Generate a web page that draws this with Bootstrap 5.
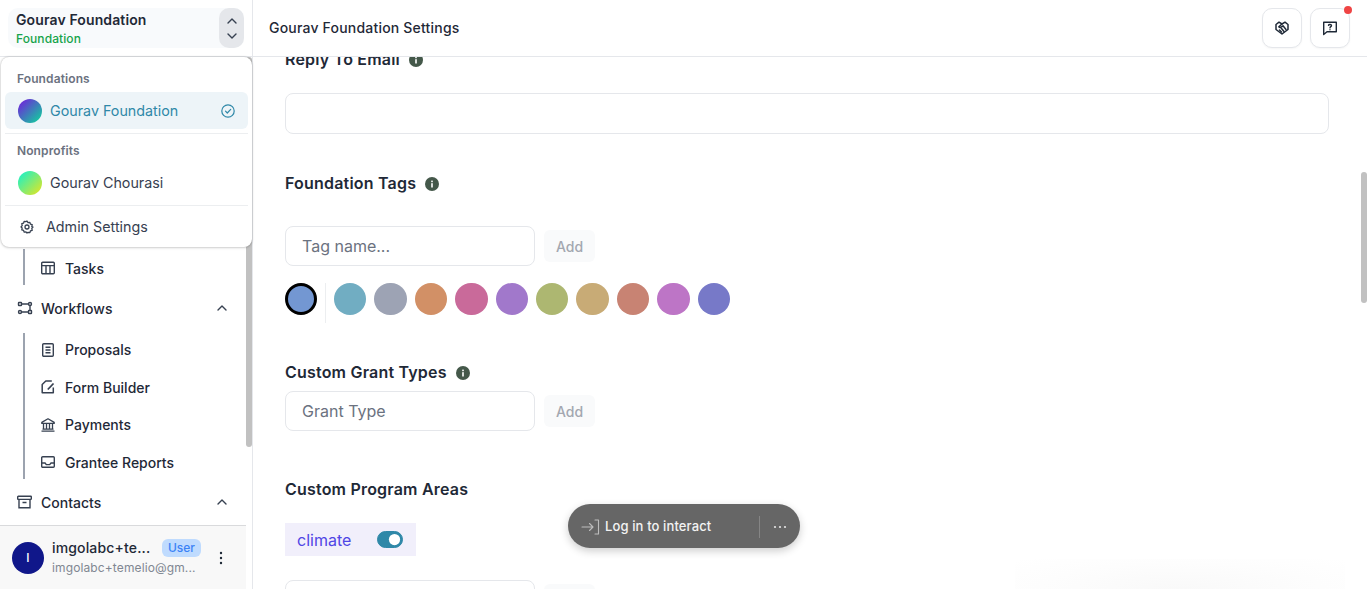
<!DOCTYPE html>
<html lang="en">
<head>
  <meta charset="UTF-8" />
  <title>Gourav Foundation Settings</title>
  <meta name="viewport" content="width=device-width, initial-scale=1" />
  <link href="https://cdn.jsdelivr.net/npm/bootstrap@5.3.3/dist/css/bootstrap.min.css" rel="stylesheet" />
  <style>
    html, body { height: 100%; overflow: hidden; }
    body { font-family: Inter, "Liberation Sans", sans-serif; color: #1f2937; background: #fff; }

    .app-shell { height: 589px; position: relative; }

    /* sidebar */
    .side-panel { width: 253px; flex: none; border-right: 1px solid #e5e7eb; position: relative; }
    .org-head { height: 57px; padding: 8px; border-bottom: 1px solid #e5e7eb; }
    .org-box { height: 40px; background: #f8fafc; border-radius: 10px; }
    .org-text { padding-left: 8px; }
    .org-name { font-size: 14px; font-weight: 600; line-height: 20px; letter-spacing: .12px; color: #1f2937; margin-top: 2px; }
    .org-kind { font-size: 12px; font-weight: 500; line-height: 16px; letter-spacing: .08px; color: #16a34a; margin-top: 1px; }
    .org-toggle { width: 25px; background: #e5e7eb; border-radius: 10px; gap: 7px; }

    .nav-area { padding-top: 192px; width: 246px; height: 468px; overflow: hidden; }
    .side-link { display: flex; align-items: center; font-size: 14px; font-weight: 500; color: #1f2937; }
    .side-group { margin-left: 23px; border-left: 2px solid #9ca3af; padding-left: 15px; }
    .side-top { padding-left: 16px; padding-right: 18px; height: 24px; gap: 9px; }
    .side-sub { height: 24px; gap: 9px; }
    .group-tasks { height: 36px; padding-top: 7px; }
    .top-flow { margin-top: 9px; padding-top: 4px; }
    .top-contacts { margin-top: 9px; padding-top: 4px; }
    .group-flow { height: 146px; margin-top: 15px; padding-top: 4.5px; }
    .group-flow .side-sub { margin-bottom: 13.5px; }

    .user-row { width: 246px; height: 64px; background: #f8f8f8; border-top: 1px solid #d9dadc; padding: 0 12px; position: absolute; left: 0; bottom: 0; }
    .user-avatar { width: 32px; height: 32px; background: #10178a; color: #fff; font-size: 12px; font-weight: 500; }
    .user-col { width: 149px; flex: none; }
    .user-name { font-size: 14px; font-weight: 500; line-height: 18px; letter-spacing: .15px; color: #1f2937; }
    .user-badge { background: #bfdbfe; color: #3b82f6; font-size: 12px; font-weight: 500; padding: 1px 6px; height: 18px; line-height: 16px; border-radius: 6px; }
    .user-mail { font-size: 12px; line-height: 16px; letter-spacing: .12px; color: #808792; margin-top: 3px; white-space: nowrap; }
    .user-more { margin-left: 10px; }
    .side-thumb { position: absolute; left: 246px; top: 57px; width: 6px; height: 390px; background: #c1c1c1; border-radius: 3px; }

    /* org menu */
    .org-menu { position: absolute; left: 1px; top: 57px; width: 251px; height: 190px; padding: 14px 0 0; margin: 0; background: #fff; border: 0; border-radius: 8px; box-shadow: 0 0 2px rgba(0,0,0,.28), 0 1px 3px rgba(0,0,0,.12); z-index: 5; }
    .menu-label { font-size: 12px; font-weight: 600; line-height: 16px; letter-spacing: .1px; color: #6b7280; padding-left: 16px; }
    .menu-row { display: flex; align-items: center; height: 37px; margin: 0 4px; padding: 0 13px; gap: 8px; font-size: 14.3px; color: #374151; border-radius: 6px; }
    .menu-row.is-active { background: #edf4f8; color: #2f88a8; margin-top: 5px; }
    .row-plain { margin-top: 5px; }
    .row-admin { margin-top: 2px; padding-left: 15px; gap: 12px; }
    .org-dot { width: 24px; height: 24px; border-radius: 50%; flex: none; }
    .dot-one { background: linear-gradient(135deg, #6d28d9 10%, #14c8a0 90%); }
    .dot-two { background: linear-gradient(135deg, #2ef0b8 15%, #d6e62c 90%); }
    .menu-line { height: 1px; background: #eceef0; margin: 4px 4px 0; }
    .label-two { margin-top: 9px; }

    /* main */
    .main-panel { min-width: 0; position: relative; }
    .page-head { height: 57px; padding: 0 17px 0 16px; border-bottom: 1px solid #e5e7eb; background: #fff; position: relative; z-index: 2; }
    .page-title { font-size: 14px; font-weight: 500; letter-spacing: .2px; color: #1f2937; margin: 0; }
    .head-btn { width: 40px; height: 40px; padding: 0; border: 1px solid #e5e7eb; border-radius: 10px; background: #fff; position: relative; box-shadow: 0 1px 2px rgba(0,0,0,.04); }
    .head-gap { gap: 8px; }
    .alert-dot { position: absolute; right: -3px; top: -3px; width: 8px; height: 8px; background: #ef4444; border-radius: 50%; }
    .page-body { height: 532px; overflow: hidden; padding: 0 38px 0 32px; }
    .field-label { display: flex; align-items: center; gap: 9px; height: 24px; font-size: 16px; font-weight: 600; letter-spacing: .2px; color: #1f2937; }
    .info-mark { width: 14px; height: 14px; flex: none; margin-top: 2px; }
    .field-input { height: 41px; border: 1px solid #e5e7eb; border-radius: 8px; font-size: 16px; padding: 0 16px; color: #1f2937; box-shadow: none; }
    .field-input::placeholder { color: #6b7280; opacity: 1; }
    .short-input { width: 250px; height: 40px; }
    .add-btn { width: 51px; height: 32px; padding: 0; border: 0; border-radius: 6px; background: #f9fafb; color: #a3a7b0; font-size: 14px; font-weight: 500; margin-left: 1px; }
    .swatch { width: 32.4px; height: 32.4px; border-radius: 50%; flex: none; }
    .swatch-on { width: 32px; height: 32px; border: 3px solid #000; }
    .swatch-line { width: 1px; height: 40px; background: #eceef0; }
    .swatch-row { gap: 8px; }
    .area-chip { width: 131px; height: 33px; background: #f1effb; color: #4f46e5; font-size: 16px; padding: 0 13px 0 12px; }
    .area-chip .form-check-input { width: 26px; height: 17px; margin: 0; background-color: #2f88a8; border-color: #2f88a8; float: none; }
    .area-chip .form-switch { padding: 0; min-height: 0; margin: 0; display: flex; }
    .mt-a { margin-top: -10px; } .mt-b { margin-top: 22px; } .mt-c { margin-top: 37px; }
    .mt-d { margin-top: 31px; } .mt-e { margin-top: 17px; } .mt-f { margin-top: 7px; }
    .mt-g { margin-top: 46px; } .mt-h { margin-top: 24px; }
    .main-thumb { position: absolute; right: 0; top: 172px; width: 6px; height: 131px; background: #c1c1c1; border-radius: 3px; }

    /* floating bar */
    .login-pill { position: absolute; left: 568px; top: 504px; width: 232px; height: 44px; background: #666; border-radius: 22px; color: #f3f3f3; font-size: 13px; font-weight: 500; letter-spacing: .12px; padding: 1px 13px 0; box-shadow: 0 3px 8px rgba(0,0,0,.2); z-index: 6; }
    .pill-text { white-space: nowrap; flex: none; width: 106px; }
    .pill-line { width: 1px; height: 22px; background: #858585; margin-left: 48px; margin-right: 13px; flex: none; }
    .bottom-fade { position: absolute; left: 1015px; top: 559px; width: 330px; height: 30px; background: radial-gradient(ellipse at 50% 100%, #f9f9f9 0%, #fdfdfd 60%, #fff 100%); }
  </style>
</head>
<body>
  <div class="app-shell d-flex">

    <aside class="side-panel">
      <div class="org-head">
        <div class="org-box d-flex justify-content-between">
          <div class="org-text">
            <div class="org-name">Gourav Foundation</div>
            <div class="org-kind">Foundation</div>
          </div>
          <div class="org-toggle d-flex flex-column align-items-center justify-content-center">
            <svg width="12" height="8" viewBox="0 0 12 8" fill="none" stroke="#374151" stroke-width="1.4" stroke-linecap="round" stroke-linejoin="round"><path d="M2 6l4-4 4 4"/></svg>
            <svg width="12" height="8" viewBox="0 0 12 8" fill="none" stroke="#374151" stroke-width="1.4" stroke-linecap="round" stroke-linejoin="round"><path d="M2 2l4 4 4-4"/></svg>
          </div>
        </div>
      </div>

      <div class="nav-area">
        <div class="side-group group-tasks">
          <div class="side-link side-sub">
            <svg width="16" height="16" viewBox="0 0 16 16" fill="none" stroke="#374151" stroke-width="1.4"><rect x="1.7" y="2.2" width="12.6" height="11.6" rx="1"/><path d="M1.7 5.6h12.6M6 5.6v8.2M10 5.6v8.2"/></svg>
            Tasks
          </div>
        </div>
        <div class="side-link side-top top-flow justify-content-between">
          <span class="d-flex align-items-center gap-2">
            <svg width="17" height="16" viewBox="0 0 17 16" fill="none" stroke="#374151" stroke-width="1.4"><rect x="2.500" y="2.500" width="3" height="3" rx=".5"/><circle cx="14" cy="4" r="1.500"/><circle cx="4" cy="12" r="1.500"/><rect x="12.500" y="10.500" width="3" height="3" rx=".5"/><path d="M5.500 4h7M5.500 12h7M14 5.500v5"/></svg>
            Workflows
          </span>
          <svg width="12" height="8" viewBox="0 0 12 8" fill="none" stroke="#374151" stroke-width="1.4" stroke-linecap="round" stroke-linejoin="round"><path d="M2 6l4-4 4 4"/></svg>
        </div>
        <div class="side-group group-flow">
          <div class="side-link side-sub">
            <svg width="16" height="16" viewBox="0 0 16 16" fill="none" stroke="#374151" stroke-width="1.4"><rect x="2.7" y="1.7" width="10.6" height="12.6" rx="1"/><path d="M5.500 5.200h5M5.500 8h5M5.500 10.800h5"/></svg>
            Proposals
          </div>
          <div class="side-link side-sub">
            <svg width="16" height="16" viewBox="0 0 16 16" fill="none" stroke="#374151" stroke-width="1.500" stroke-linejoin="round"><path d="M13.300 8.500v5.300H2.200V5.500L5.800 2h6"/><path d="M7.800 10.500L13.500 4.500" stroke-width="1.800"/></svg>
            Form Builder
          </div>
          <div class="side-link side-sub">
            <svg width="16" height="16" viewBox="0 0 16 16" fill="none" stroke="#374151" stroke-width="1.3" stroke-linejoin="round"><path d="M1.800 5.400L8 1.800l6.200 3.600v1H1.800zM3.500 6.500v5.500M6.500 6.500v5.500M9.500 6.500v5.500M12.500 6.500v5.500M2.500 12.200h11M1.500 14.200h13"/></svg>
            Payments
          </div>
          <div class="side-link side-sub">
            <svg width="16" height="16" viewBox="0 0 16 16" fill="none" stroke="#374151" stroke-width="1.4" stroke-linejoin="round"><rect x="1.7" y="2.7" width="12.6" height="10.6" rx="1"/><path d="M1.700 9h3.400l1.200 1.600h3.400L11 9h3.300"/></svg>
            Grantee Reports
          </div>
        </div>
        <div class="side-link side-top top-contacts justify-content-between">
          <span class="d-flex align-items-center gap-2">
            <svg width="17" height="16" viewBox="0 0 17 16" fill="none" stroke="#374151" stroke-width="1.4"><rect x="1.7" y="2.2" width="13.600" height="3.200" rx=".6"/><path d="M3 5.400v8.400h11V5.400M6.500 8.500h4"/></svg>
            Contacts
          </span>
          <svg width="12" height="8" viewBox="0 0 12 8" fill="none" stroke="#374151" stroke-width="1.4" stroke-linecap="round" stroke-linejoin="round"><path d="M2 6l4-4 4 4"/></svg>
        </div>
      </div>

      <div class="user-row d-flex align-items-center gap-2">
        <div class="user-avatar rounded-circle d-flex align-items-center justify-content-center flex-shrink-0">I</div>
        <div class="user-col">
          <div class="d-flex align-items-center justify-content-between">
            <span class="user-name">imgolabc+te...</span>
            <span class="user-badge">User</span>
          </div>
          <div class="user-mail">imgolabc+temelio@gm...</div>
        </div>
        <svg class="user-more" width="4" height="14" viewBox="0 0 4 14" fill="#1f2937"><circle cx="2" cy="2" r="1.200"/><circle cx="2" cy="7" r="1.200"/><circle cx="2" cy="12" r="1.200"/></svg>
      </div>
      <div class="side-thumb"></div>

      <div class="org-menu dropdown-menu d-block">
        <div class="menu-label">Foundations</div>
        <div class="menu-row is-active justify-content-between">
          <span class="d-flex align-items-center gap-2"><span class="org-dot dot-one"></span>Gourav Foundation</span>
          <svg width="14" height="14" viewBox="0 0 14 14" fill="none" stroke="#2f88a8" stroke-width="1.200" stroke-linecap="round" stroke-linejoin="round"><circle cx="7" cy="7" r="6.200"/><path d="M4.500 7.200l1.800 1.800 3.400-3.600"/></svg>
        </div>
        <div class="menu-line"></div>
        <div class="menu-label label-two">Nonprofits</div>
        <div class="menu-row row-plain"><span class="org-dot dot-two"></span>Gourav Chourasi</div>
        <div class="menu-line"></div>
        <div class="menu-row row-admin">
          <svg width="14" height="14" viewBox="0 0 14 14" fill="none" stroke="#374151" stroke-width="1.300" stroke-linejoin="round"><path d="M7 1l1 1.600 1.900-.3.500 1.800 1.800.6-.4 1.900L13 7l-1.200 1.400.4 1.900-1.800.6-.5 1.800-1.900-.3L7 13l-1-1.100-1.900.3-.5-1.800-1.800-.6.4-1.900L1 7l1.200-1.400-.4-1.900 1.800-.6.500-1.800 1.900.3z"/><circle cx="7" cy="7" r="2"/></svg>
          Admin Settings
        </div>
      </div>
    </aside>

    <main class="main-panel flex-grow-1">
      <header class="page-head d-flex align-items-center justify-content-between">
        <h1 class="page-title">Gourav Foundation Settings</h1>
        <div class="d-flex head-gap">
          <button class="head-btn d-flex align-items-center justify-content-center" type="button">
            <svg width="16" height="16" viewBox="0 0 16 16" fill="none" stroke="#1f2937" stroke-width="1.500" stroke-linejoin="round" stroke-linecap="round"><path d="M5 2.200L2 4.500v5L8 14l6-4.500v-5l-3-2.300L8 4z"/><path d="M8 4L4.800 6.800c.8 1 2 .8 2.800 0l1.400-1 3 3.700M5.500 10l2 2M7.500 8.500l2.500 3"/></svg>
          </button>
          <button class="head-btn d-flex align-items-center justify-content-center" type="button">
            <svg width="16" height="16" viewBox="0 0 16 16" fill="none" stroke="#1f2937" stroke-width="1.400" stroke-linejoin="round" stroke-linecap="round"><path d="M1.700 2.200h12.600v9.600H5L1.700 14.500z"/><path d="M6.500 5.300c.3-1 3-1.200 3 .4 0 1-1.500 1-1.500 2.200M8 9.700v.1"/></svg>
            <span class="alert-dot"></span>
          </button>
        </div>
      </header>

      <div class="page-body">
        <div class="field-label mt-a">Reply To Email
          <svg class="info-mark" viewBox="0 0 14 14"><circle cx="7" cy="7" r="7" fill="#44584a"/><rect x="6.200" y="6.200" width="1.600" height="4.300" fill="#fff"/><rect x="6.200" y="3.600" width="1.600" height="1.600" fill="#fff"/></svg>
        </div>
        <input class="form-control field-input mt-b" type="text" />

        <div class="field-label mt-c">Foundation Tags
          <svg class="info-mark" viewBox="0 0 14 14"><circle cx="7" cy="7" r="7" fill="#44584a"/><rect x="6.200" y="6.200" width="1.600" height="4.300" fill="#fff"/><rect x="6.200" y="3.600" width="1.600" height="1.600" fill="#fff"/></svg>
        </div>
        <div class="d-flex align-items-center gap-2 mt-d">
          <input class="form-control field-input short-input" type="text" placeholder="Tag name..." />
          <button class="btn add-btn" type="button">Add</button>
        </div>
        <div id="swatches" class="d-flex align-items-start swatch-row mt-e"></div>

        <div class="field-label mt-c">Custom Grant Types
          <svg class="info-mark" viewBox="0 0 14 14"><circle cx="7" cy="7" r="7" fill="#44584a"/><rect x="6.200" y="6.200" width="1.600" height="4.300" fill="#fff"/><rect x="6.200" y="3.600" width="1.600" height="1.600" fill="#fff"/></svg>
        </div>
        <div class="d-flex align-items-center gap-2 mt-f">
          <input class="form-control field-input short-input" type="text" placeholder="Grant Type" />
          <button class="btn add-btn" type="button">Add</button>
        </div>

        <div class="field-label mt-g">Custom Program Areas</div>
        <div class="area-chip d-flex align-items-center justify-content-between mt-b">
          <span>climate</span>
          <div class="form-check form-switch"><input class="form-check-input" type="checkbox" checked /></div>
        </div>
        <div class="d-flex align-items-center gap-2 mt-h">
          <input class="form-control field-input short-input" type="text" />
          <button class="btn add-btn" type="button">Add</button>
        </div>
      </div>
      <div class="main-thumb"></div>
    </main>

    <div class="bottom-fade"></div>
    <div class="login-pill d-flex align-items-center">
      <svg class="me-1 flex-shrink-0" width="20" height="18" viewBox="0 0 20 18" fill="none" stroke="#bdbdbd" stroke-width="1.100" stroke-linecap="round" stroke-linejoin="round"><path d="M1 9h11M8.500 5.500L12 9l-3.500 3.500M14 2h3.500v14H14"/></svg>
      <span class="pill-text">Log in to interact</span>
      <span class="pill-line"></span>
      <svg class="flex-shrink-0" width="14" height="4" viewBox="0 0 14 4" fill="#e4e4e4"><circle cx="2" cy="2" r="1.100"/><circle cx="7" cy="2" r="1.100"/><circle cx="12" cy="2" r="1.100"/></svg>
    </div>
  </div>

  <script src="https://cdn.jsdelivr.net/npm/bootstrap@5.3.3/dist/js/bootstrap.bundle.min.js"></script>
  <script>
    const swatchColors = ["#71adc2", "#9da3b4", "#d29066", "#c96a9a", "#a178cb", "#adb771", "#c8ab76", "#c88373", "#bd75c6", "#7779c8"];
    const swatchBox = document.getElementById("swatches");
    swatchBox.innerHTML = `<span class="swatch swatch-on" style="background:#7397d2"></span><span class="swatch-line"></span>` +
      swatchColors.map(c => `<span class="swatch" style="background:${c}"></span>`).join("");
  </script>
</body>
</html>
